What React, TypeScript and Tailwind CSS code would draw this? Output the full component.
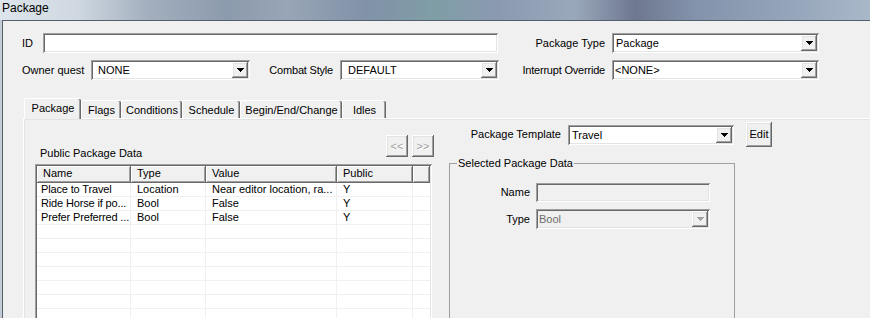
import React from 'react';

const SUNKEN =
  'shadow-[inset_1px_1px_0_#a0a0a0,inset_-1px_-1px_0_#ffffff,inset_2px_2px_0_#696969,inset_-2px_-2px_0_#e3e3e3]';
const RAISED =
  'shadow-[inset_-1px_-1px_0_#696969,inset_1px_1px_0_#ffffff,inset_-2px_-2px_0_#a0a0a0,inset_2px_2px_0_#e3e3e3]';

function Arrow({ disabled }: { disabled?: boolean }) {
  return (
    <div className={`w-[16px] h-full shrink-0 bg-[#f0f0f0] flex items-center justify-center ${RAISED}`}>
      <svg width="7" height="4" viewBox="0 0 7 4" shapeRendering="crispEdges">
        <path
          d="M0 0h7v1h-1v1h-1v1h-1v1h-1v-1h-1v-1h-1v-1h-1z"
          fill={disabled ? '#a0a0a0' : '#000000'}
        />
      </svg>
    </div>
  );
}

interface ComboProps {
  value: string;
  width: string;
  pad: string;
  disabled?: boolean;
}

function Combo({ value, width, pad, disabled }: ComboProps) {
  return (
    <div
      className={`flex h-[20px] p-[2px] shrink-0 ${width} ${SUNKEN} ${
        disabled ? 'bg-[#f0f0f0] text-[#6d6d6d]' : 'bg-white'
      }`}
    >
      <div className={`flex-1 min-w-0 truncate leading-[16px] ${pad}`}>{value}</div>
      <Arrow disabled={disabled} />
    </div>
  );
}

const columns = ['w-[94px]', 'w-[75px]', 'w-[131px]', 'w-[76px]'];

const rows = [
  ['Place to Travel', 'Location', 'Near editor location, ra...', 'Y'],
  ['Ride Horse if po...', 'Bool', 'False', 'Y'],
  ['Prefer Preferred ...', 'Bool', 'False', 'Y'],
  ['', '', '', ''],
  ['', '', '', ''],
  ['', '', '', ''],
  ['', '', '', ''],
  ['', '', '', ''],
  ['', '', '', ''],
  ['', '', '', ''],
];

const tabs = [
  { label: 'Flags', w: 'w-[40px]' },
  { label: 'Conditions', w: 'w-[61px]' },
  { label: 'Schedule', w: 'w-[58px]' },
  { label: 'Begin/End/Change', w: 'w-[102px]' },
  { label: 'Idles', w: 'w-[44px]' },
];

export default function App() {
  return (
    <div className="w-[870px] h-[318px] overflow-hidden flex flex-col bg-[#f0f0f0] text-[11px] text-black font-['Liberation_Sans',Arial,sans-serif]">
      {/* title bar */}
      <div className="h-[20px] shrink-0 pl-[2px] pt-[1px] text-[12px] leading-[14px] bg-[linear-gradient(90deg,#dde4eb_0%,#cfd8e1_9%,#a3afbe_17%,#8c9aad_26%,#98a5b6_33%,#8192a8_42%,#7f9ea6_50%,#8a99b0_57%,#9aa8bb_66%,#6e7890_73%,#8393ab_80%,#93a3b8_90%,#a9b8c9_100%)]">
        Package
      </div>

      <div className="flex-1 pl-[2px] bg-[#c3ccd6]">
        <div className="h-full flex flex-col border-l border-t border-[#56606c] bg-[#f0f0f0] pt-[12px]">
          {/* row 1 */}
          <div className="flex items-center pl-[19px]">
            <div className="w-[21px]">ID</div>
            <div className={`w-[455px] h-[20px] bg-white ${SUNKEN}`} />
            <div className="w-[114px] text-right pr-[7px]">Package Type</div>
            <Combo value="Package" width="w-[207px]" pad="pl-[2px]" />
          </div>

          {/* row 2 */}
          <div className="flex items-center pl-[19px] mt-[7px]">
            <div className="w-[69px]">Owner quest</div>
            <Combo value="NONE" width="w-[159px]" pad="pl-[5px]" />
            <div className="w-[90px] text-right pr-[7px] tracking-[-0.2px]">Combat Style</div>
            <Combo value="DEFAULT" width="w-[159px]" pad="pl-[6px]" />
            <div className="w-[113px] text-right pr-[7px] tracking-[-0.2px]">Interrupt Override</div>
            <Combo value="<NONE>" width="w-[207px]" pad="pl-[1px]" />
          </div>

          {/* tab control */}
          <div className="flex-1 flex flex-col ml-[20px] mt-[18px]">
            <div className="flex items-end h-[20px] pl-[1px]">
              <div className="relative z-10 w-[57px] h-[21px] mb-[-1px] bg-[#f0f0f0] border-t border-l border-white rounded-t-[2px] shadow-[inset_-1px_0_0_#696969,inset_-2px_0_0_#a0a0a0] flex items-start justify-center pt-[3px] leading-[13px]">
                Package
              </div>
              {tabs.map((t) => (
                <div
                  key={t.label}
                  className={`${t.w} h-[18px] border-t border-l border-white rounded-t-[2px] shadow-[inset_-1px_0_0_#696969,inset_-2px_0_0_#a0a0a0] flex items-center justify-center pt-[1px]`}
                >
                  {t.label}
                </div>
              ))}
            </div>

            <div className="flex-1 flex border-t border-l border-white shadow-[inset_1px_1px_0_#e3e3e3]">
              {/* left column */}
              <div className="w-[400px] ml-[11px] pt-[16px] flex flex-col">
                <div className="flex h-[24px]">
                  <div className="self-end ml-[5px] leading-[12px]">Public Package Data</div>
                  <div
                    className={`ml-auto w-[22px] h-[22px] flex items-center justify-center text-[#a0a0a0] [text-shadow:1px_1px_0_#ffffff] ${RAISED}`}
                  >
                    &lt;&lt;
                  </div>
                  <div
                    className={`ml-[4px] mr-[1px] w-[22px] h-[22px] flex items-center justify-center text-[#a0a0a0] [text-shadow:1px_1px_0_#ffffff] ${RAISED}`}
                  >
                    &gt;&gt;
                  </div>
                </div>

                <div className={`mt-[5px] w-[397px] h-[180px] p-[2px] bg-white ${SUNKEN}`}>
                  <div className="flex h-[17px]">
                    {['Name', 'Type', 'Value', 'Public'].map((h, i) => (
                      <div
                        key={h}
                        className={`${columns[i]} bg-[#f0f0f0] pl-[6px] leading-[15px] shadow-[inset_-1px_-1px_0_#696969,inset_1px_1px_0_#ffffff,inset_-2px_-2px_0_#a0a0a0]`}
                      >
                        {h}
                      </div>
                    ))}
                    <div className="flex-1 bg-[#f0f0f0] shadow-[inset_-1px_-1px_0_#696969,inset_1px_1px_0_#ffffff,inset_-2px_-2px_0_#a0a0a0]" />
                  </div>
                  {rows.map((r, ri) => (
                    <div key={ri} className="flex h-[14px] border-b border-[#f0f0f0]">
                      {r.map((c, ci) => (
                        <div
                          key={ci}
                          className={`${columns[ci]} border-r border-[#f0f0f0] leading-[13px] whitespace-nowrap ${
                            ci === 0 ? 'pl-[4px] tracking-[-0.15px]' : 'pl-[6px]'
                          }`}
                        >
                          {c}
                        </div>
                      ))}
                      <div className="flex-1" />
                    </div>
                  ))}
                </div>
              </div>

              {/* right column */}
              <div className="ml-[14px] pt-[3px] flex flex-col">
                <div className="flex items-center h-[25px]">
                  <div className="w-[112px] text-right">Package Template</div>
                  <div className="ml-[7px]">
                    <Combo value="Travel" width="w-[166px]" pad="pl-[2px]" />
                  </div>
                  <div className={`ml-[12px] w-[26px] h-[25px] bg-[#f0f0f0] flex items-center justify-center ${RAISED}`}>
                    Edit
                  </div>
                </div>

                <fieldset className="mt-[10px] w-[286px] h-[200px] border border-[#a0a0a0]">
                  <legend className="ml-[7px] px-[1px] leading-[12px]">Selected Package Data</legend>
                  <div className="flex items-center mt-[14px]">
                    <div className="w-[86px] text-right pr-[6px]">Name</div>
                    <div className={`w-[174px] h-[19px] bg-[#f0f0f0] ${SUNKEN}`} />
                  </div>
                  <div className="flex items-center mt-[7px]">
                    <div className="w-[86px] text-right pr-[6px]">Type</div>
                    <Combo value="Bool" width="w-[174px]" pad="pl-[1px]" disabled />
                  </div>
                </fieldset>
              </div>
            </div>
          </div>
        </div>
      </div>
    </div>
  );
}
